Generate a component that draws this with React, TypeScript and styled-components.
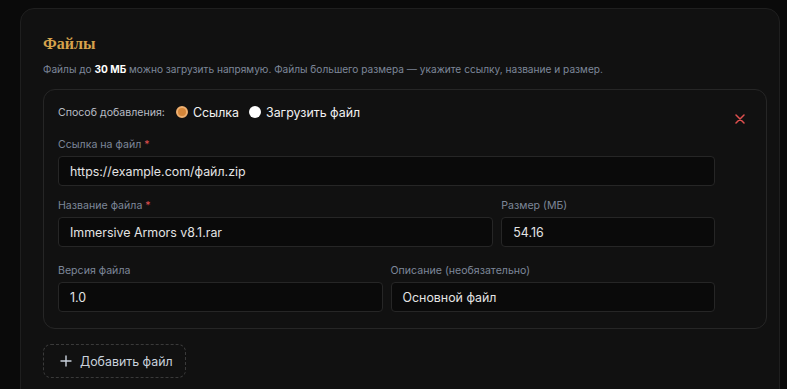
import React from "react";
import styled, { createGlobalStyle } from "styled-components";

const Global = createGlobalStyle`
  html, body { margin: 0; padding: 0; background: #0a0a0a; }
  body { font-family: Inter, "Noto Sans", sans-serif; }
  * { box-sizing: border-box; }
`;

const Page = styled.div`
  padding: 8px 7px 0 20px;
  height: 389px;
  overflow: hidden;
`;

const Section = styled.section`
  background: #111111;
  border: 1px solid #1f1f1f;
  border-radius: 14px;
  padding: 25px 12px 40px 22px;
  min-height: 420px;
`;

const Title = styled.h2`
  margin: 0;
  font-family: "Liberation Serif", "DejaVu Serif", serif;
  font-weight: 700;
  font-size: 16px;
  line-height: 20px;
  color: #d6a24c;
`;

const Desc = styled.p`
  margin: 8px 0 0;
  font-size: 10.15px;
  line-height: 14px;
  color: #7d8799;
  b { color: #ffffff; font-weight: 700; }
`;

const FileCard = styled.div`
  margin-top: 13px;
  border: 1px solid #262626;
  border-radius: 12px;
  padding: 13px 51px 16px 14px;
  position: relative;
`;

const ModeRow = styled.div`
  display: flex;
  align-items: center;
  height: 18px;
`;

const ModeLabel = styled.span`
  font-size: 10.6px;
  color: #b8bcc4;
  margin-right: 11px;
`;

const RadioOption = styled.label`
  display: flex;
  align-items: center;
  gap: 5px;
  font-size: 12.4px;
  color: #f2f2f2;
  margin-right: 10px;
`;

const RadioDot = styled.span<{ $on?: boolean }>`
  width: 12px;
  height: 12px;
  border-radius: 50%;
  background: ${(p) => (p.$on ? "#d4863a" : "#ffffff")};
  border: ${(p) => (p.$on ? "2px solid #efb070" : "none")};
`;

const CloseBtn = styled.button`
  position: absolute;
  top: 22px;
  right: 20px;
  width: 13px;
  height: 13px;
  padding: 0;
  background: none;
  border: none;
  color: #e0504f;
  display: flex;
  align-items: center;
  justify-content: center;
`;

const Form = styled.div`
  display: flex;
  flex-direction: column;
  margin-top: 17px;
`;

const Row = styled.div<{ $gap: number }>`
  display: grid;
  grid-template-columns: repeat(12, 1fr);
  column-gap: 8px;
  margin-top: ${(p) => p.$gap}px;
`;

const Field = styled.div<{ $span: number }>`
  grid-column: span ${(p) => p.$span};
  display: flex;
  flex-direction: column;
  gap: 4px;
`;

const Label = styled.label`
  font-size: 10.6px;
  line-height: 14px;
  color: #7d8799;
  span { color: #e0504f; }
`;

const Input = styled.div`
  height: 30px;
  background: #0a0a0a;
  border: 1px solid #262626;
  border-radius: 4px;
  padding: 0 11px;
  display: flex;
  align-items: center;
  font-size: 12.4px;
  color: #e4e4e4;
`;

const AddButton = styled.button`
  margin-top: 15px;
  width: 143px;
  height: 34px;
  border: 1px dashed #3a3a3a;
  border-radius: 8px;
  background: transparent;
  display: flex;
  align-items: center;
  gap: 8px;
  padding: 0 0 0 16px;
  font-family: Inter, "Noto Sans", sans-serif;
  font-size: 12.4px;
  color: #c9d1dc;
`;

export default function App() {
  return (
    <>
      <Global />
      <Page>
        <Section>
          <Title>Файлы</Title>
          <Desc>
            Файлы до <b>30 МБ</b> можно загрузить напрямую. Файлы большего размера — укажите ссылку, название и размер.
          </Desc>
          <FileCard>
            <ModeRow>
              <ModeLabel>Способ добавления:</ModeLabel>
              <RadioOption>
                <RadioDot $on />
                Ссылка
              </RadioOption>
              <RadioOption>
                <RadioDot />
                Загрузить файл
              </RadioOption>
            </ModeRow>
            <CloseBtn aria-label="Удалить">
              <svg width="10" height="10" viewBox="0 0 10 10" fill="none" stroke="currentColor" strokeWidth="1.5" strokeLinecap="round">
                <path d="M1 1L9 9M9 1L1 9" />
              </svg>
            </CloseBtn>
            <Form>
              <Row $gap={0}>
                <Field $span={12}>
                  <Label>Ссылка на файл <span>*</span></Label>
                  <Input>https://example.com/файл.zip</Input>
                </Field>
              </Row>
              <Row $gap={13}>
                <Field $span={8}>
                  <Label>Название файла <span>*</span></Label>
                  <Input>Immersive Armors v8.1.rar</Input>
                </Field>
                <Field $span={4}>
                  <Label>Размер (МБ)</Label>
                  <Input>54.16</Input>
                </Field>
              </Row>
              <Row $gap={17}>
                <Field $span={6}>
                  <Label>Версия файла</Label>
                  <Input>1.0</Input>
                </Field>
                <Field $span={6}>
                  <Label>Описание (необязательно)</Label>
                  <Input>Основной файл</Input>
                </Field>
              </Row>
            </Form>
          </FileCard>
          <AddButton>
            <svg width="12" height="12" viewBox="0 0 12 12" fill="none" stroke="currentColor" strokeWidth="1.4" strokeLinecap="round">
              <path d="M6 1V11M1 6H11" />
            </svg>
            Добавить файл
          </AddButton>
        </Section>
      </Page>
    </>
  );
}
